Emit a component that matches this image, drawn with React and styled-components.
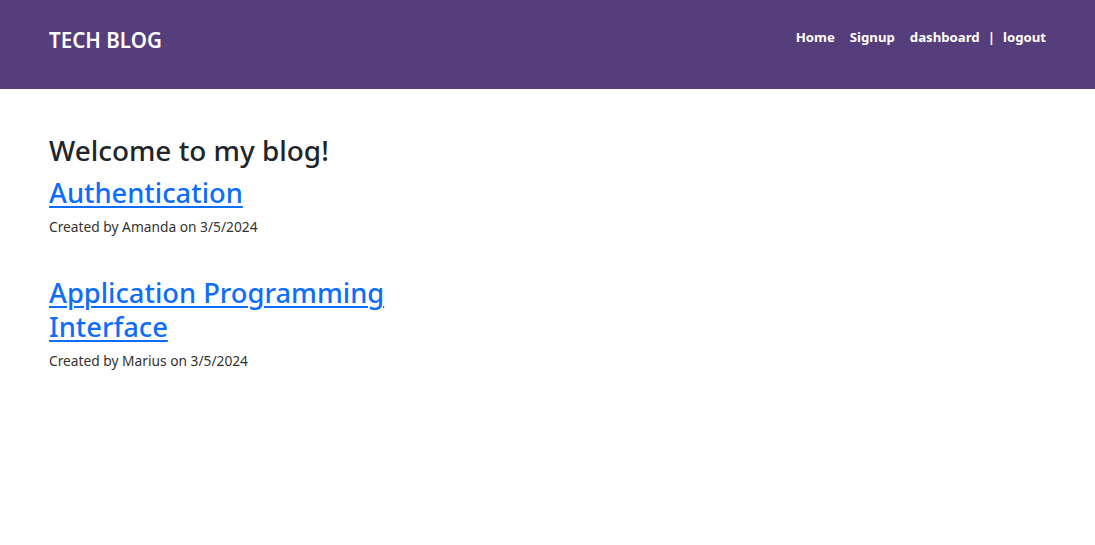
import React from "react";
import styled, { createGlobalStyle } from "styled-components";

const Global = createGlobalStyle`
  html, body { margin: 0; padding: 0; background: #fff; }
  body { font-family: "Noto Sans", "Open Sans", sans-serif; color: #212529; }
  * { box-sizing: border-box; }
`;

const Header = styled.header`
  height: 89px;
  background: #563d7c;
  display: flex;
  justify-content: space-between;
  align-items: flex-start;
  padding: 0 49px;
`;

const Logo = styled.div`
  color: #fff;
  font-size: 20.6px;
  font-weight: 600;
  margin-top: 26px;
`;

const Nav = styled.nav`
  display: flex;
  align-items: baseline;
  margin-top: 28px;
  color: #fff;
  font-size: 13.2px;
  font-weight: 700;
`;

const NavLink = styled.a`
  color: #fff;
  text-decoration: none;
  margin-left: ${(p) => (p.$first || p.$afterSep ? "0" : "15px")};
`;

const Sep = styled.span`
  margin: 0 8px;
`;

const Main = styled.main`
  padding: 45px 49px;
`;

const Title = styled.h2`
  margin: 0 0 8px;
  font-size: 27.9px;
  font-weight: 500;
  line-height: 33.5px;
  color: #212529;
`;

const Post = styled.article`
  max-width: 370px;
  margin-bottom: 39px;
`;

const PostTitle = styled.h2`
  margin: 0 0 7px;
  font-size: 27.3px;
  font-weight: 500;
  line-height: 33.5px;
`;

const PostLink = styled.a`
  color: #0d6efd;
  text-decoration: underline;
  text-decoration-thickness: 2px;
  text-underline-offset: 3px;
`;

const Meta = styled.p`
  margin: 0;
  font-size: 13.75px;
  line-height: 21px;
  color: #333;
`;

const posts = [
  { title: "Authentication", author: "Amanda", date: "3/5/2024" },
  { title: "Application Programming Interface", author: "Marius", date: "3/5/2024" },
];

export default function App() {
  return (
    <>
      <Global />
      <Header>
        <Logo>TECH BLOG</Logo>
        <Nav>
          <NavLink $first href="#">Home</NavLink>
          <NavLink href="#">Signup</NavLink>
          <NavLink href="#">dashboard</NavLink>
          <Sep>|</Sep>
          <NavLink $afterSep href="#">logout</NavLink>
        </Nav>
      </Header>
      <Main>
        <Title>Welcome to my blog!</Title>
        {posts.map((p) => (
          <Post key={p.title}>
            <PostTitle>
              <PostLink href="#">{p.title}</PostLink>
            </PostTitle>
            <Meta>Created by {p.author} on {p.date}</Meta>
          </Post>
        ))}
      </Main>
    </>
  );
}
